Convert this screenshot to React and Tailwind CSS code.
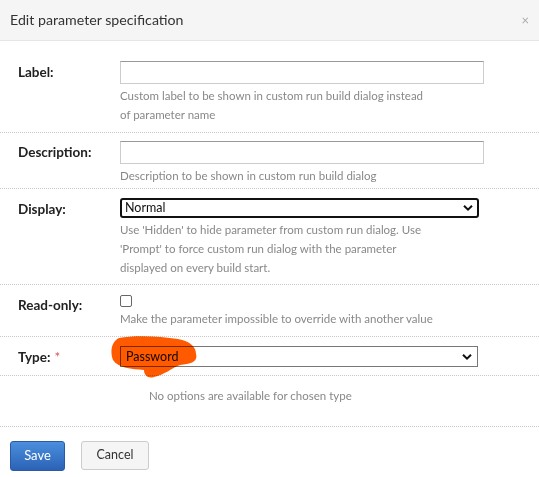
import React from 'react';

const font = { fontFamily: 'Lato, "Open Sans", sans-serif' };

function Chevron() {
  return (
    <svg width="10" height="7" viewBox="0 0 10 7" className="absolute right-[6px] top-1/2 -translate-y-1/2 pointer-events-none">
      <path d="M1 1.2 L5 5.2 L9 1.2" fill="none" stroke="#111" strokeWidth="2" />
    </svg>
  );
}

function Row({ label, required, children, className = '' }) {
  return (
    <div className={`flex border-b border-dotted border-[#c8c8c8] ${className}`}>
      <div className="w-[120px] shrink-0 pl-[18px] text-[13.5px] font-bold text-[#222] leading-[22px]">
        {label}
        {required && <span className="text-[#d9534f] font-normal ml-[4px]">*</span>}
      </div>
      <div className="flex-1">{children}</div>
    </div>
  );
}

function Help({ children }) {
  return <div className="text-[11.5px] leading-[19px] text-[#888] mt-[2px]">{children}</div>;
}

export default function App() {
  return (
    <div className="w-[539px] h-[477px] bg-white overflow-hidden" style={font}>
      <div className="h-[41px] bg-[#f5f5f5] border-b border-[#e6e6e6] flex items-center justify-between pl-[10px] pr-[10px]">
        <span className="text-[14.2px] text-[#333]">Edit parameter specification</span>
        <span className="text-[13px] text-[#aaa] leading-none">×</span>
      </div>

      <div className="pt-[12px]">
        <Row label="Label:" className="pt-[8px] pb-[8px]">
          <input className="block w-[364px] h-[23px] border border-[#ccc] border-t-[#999] bg-white outline-none" />
          <Help>
            Custom label to be shown in custom run build dialog instead
            <br />
            of parameter name
          </Help>
        </Row>

        <Row label="Description:" className="pt-[8px] pb-[3px]">
          <input className="block w-[364px] h-[23px] border border-[#ccc] border-t-[#999] bg-white outline-none" />
          <Help>Description to be shown in custom run build dialog</Help>
        </Row>

        <Row label="Display:" className="pt-[9px] pb-[7px]">
          <div className="relative w-[359px] h-[20px]">
            <div className="h-full border-2 border-[#111] rounded-[3px] bg-white pl-[3px] text-[12.5px] leading-[16px] text-[#111]">
              Normal
            </div>
            <Chevron />
          </div>
          <Help>
            Use 'Hidden' to hide parameter from custom run dialog. Use
            <br />
            'Prompt' to force custom run dialog with the parameter
            <br />
            displayed on every build start.
          </Help>
        </Row>

        <Row label="Read-only:" className="pt-[9px] pb-[8px]">
          <div className="h-[13px] flex items-center">
            <span className="block w-[12px] h-[12px] border border-[#666] rounded-[2px] bg-white" />
          </div>
          <Help>Make the parameter impossible to override with another value</Help>
        </Row>

        <Row label="Type:" required className="pt-[9px] pb-[7px]">
          <div className="relative w-[358px] h-[21px]">
            <div className="h-full border border-[#777] bg-white pl-[5px] text-[12.5px] leading-[19px] text-[#111]">
              Password
            </div>
            <Chevron />
            <svg
              width="92"
              height="46"
              viewBox="0 0 92 46"
              className="absolute left-[-10px] top-[-11px] mix-blend-multiply pointer-events-none"
            >
              <path
                d="M9 3 C24 0 50 1 68 4 C80 6 86 12 86 19 C88 26 82 29 70 30 C62 33 54 40 44 42 C38 44 34 40 34 35 C22 34 8 33 3 25 C0 17 1 7 9 3 Z"
                fill="#ff5a00"
              />
            </svg>
          </div>
        </Row>

        <div className="border-b border-dotted border-[#c8c8c8] pt-[10px] pb-[21px] pl-[149px] text-[11.5px] leading-[19px] text-[#888]">
          No options are available for chosen type
        </div>

        <div className="flex gap-[16px] pl-[10px] pt-[14px]">
          <button className="w-[55px] h-[30px] rounded-[3px] border border-[#2a5aa6] bg-gradient-to-b from-[#4b8fdd] to-[#2c62b6] text-white text-[13px]">
            Save
          </button>
          <button className="w-[68px] h-[29px] rounded-[3px] border border-[#ccc] bg-[#f5f5f5] text-[#333] text-[12.5px]">
            Cancel
          </button>
        </div>
      </div>
    </div>
  );
}
